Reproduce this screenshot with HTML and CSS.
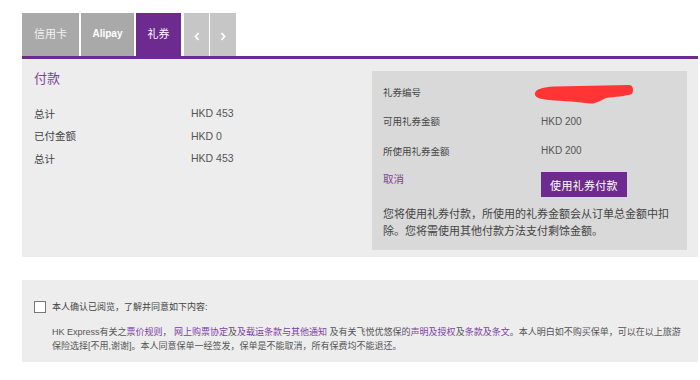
FILE: index.html
```html
<!DOCTYPE html>
<html lang="zh-CN">
<head>
    <meta charset="UTF-8">
    <title>付款</title>
    <link rel="stylesheet" href="styles.css">
</head>
<body>

<div class="page">
    <div class="tabs">
        <div class="tab">信用卡</div>
        <div class="tab tab-bold">Alipay</div>
        <div class="tab active">礼券</div>
        <div class="tab arrow">
            <svg width="6" height="9" viewBox="0 0 6 9"><path d="M4.5 1 L1.5 4.5 L4.5 8" fill="none" stroke="#fff" stroke-width="1.8"/></svg>
        </div>
        <div class="tab arrow arrow-last">
            <svg width="6" height="9" viewBox="0 0 6 9"><path d="M1.5 1 L4.5 4.5 L1.5 8" fill="none" stroke="#fff" stroke-width="1.8"/></svg>
        </div>
    </div>

    <div class="panel">
        <div class="summary">
            <h2 class="title">付款</h2>
            <div class="rows">
                <div class="label">总计</div><div class="value">HKD 453</div>
                <div class="label">已付金额</div><div class="value">HKD 0</div>
                <div class="label">总计</div><div class="value">HKD 453</div>
            </div>
        </div>

        <div class="voucher">
            <div class="vrow">
                <div class="vlabel">礼券编号</div>
                <div class="vvalue redact">
                    <svg class="scribble" width="100" height="20" viewBox="0 0 100 20">
                        <path d="M1 9 C2 5 10 3 20 2.5 C45 2 70 1.5 95 1 C99 1 100 6 98 10 C92 12 80 13 72 14 C66 17 61 20 56 19.5 C45 18 30 17 15 16 C5 15 0 13 1 9 Z" fill="#ff3434"/>
                    </svg>
                </div>
            </div>
            <div class="vrow">
                <div class="vlabel">可用礼券金额</div>
                <div class="vvalue">HKD 200</div>
            </div>
            <div class="vrow">
                <div class="vlabel">所使用礼券金额</div>
                <div class="vvalue">HKD 200</div>
            </div>
            <div class="actions">
                <a class="cancel" href="#">取消</a>
                <button class="btn">使用礼券付款</button>
            </div>
            <p class="note">您将使用礼券付款，所使用的礼券金额会从订单总金额中扣除。您将需使用其他付款方法支付剩馀金额。</p>
        </div>
    </div>

    <div class="terms">
        <label class="confirm"><span class="box"></span>本人确认已阅览，了解并同意如下内容:</label>
        <p class="terms-text">HK Express有关之<a href="#">票价规则</a>， <a href="#">网上购票协定</a>及<a href="#">及载运条款与其他通知</a> 及有关飞悦优悠保的<a href="#">声明及授权</a>及<a href="#">条款及条文</a>。本人明白如不购买保单，可以在以上旅游保险选择[不用,谢谢]。本人同意保单一经签发，保单是不能取消，所有保费均不能退还。</p>
    </div>
</div>

</body>
</html>
```

FILE: styles.css
```css
body {
    margin: 0;
    background-color: #fff;
    font-family: "Liberation Sans", "Noto Sans CJK SC", sans-serif;
    color: #444;
}
.page {
    padding: 13px 0 0 22px;
    width: 676px;
}
.tabs {
    display: flex;
    height: 43px;
}
.tab {
    display: flex;
    align-items: center;
    justify-content: center;
    width: 57px;
    margin-right: 2px;
    background-color: #a9a9a9;
    color: #f2f2f2;
    font-size: 11px;
    padding-bottom: 3px;
    box-sizing: border-box;
}
.tab-bold {
    width: 53px;
    font-weight: bold;
    font-size: 10px;
    color: #fff;
}
.tab.active {
    width: 45px;
    margin-right: 3px;
    background-color: #6d2b90;
    color: #fff;
}
.tab.arrow {
    width: 25px;
    margin-right: 1px;
    background-color: #c6c6c6;
    padding-bottom: 0;
    padding-top: 4px;
}
.tab.arrow-last {
    width: 26px;
}
.panel {
    display: flex;
    border-top: 3px solid #6d2b90;
    background-color: #ededed;
    padding: 12px 11px 7px 12px;
}
.summary {
    flex: 1;
}
.title {
    margin: 0 0 15px;
    font-size: 13px;
    line-height: 16px;
    font-weight: normal;
    color: #7d3fa3;
}
.rows {
    display: grid;
    grid-template-columns: 157px auto;
    grid-auto-rows: 22.5px;
    align-items: center;
    font-size: 10.5px;
}
.label {
    color: #444;
}
.value {
    color: #555;
}
.voucher {
    width: 315px;
    box-sizing: border-box;
    background-color: #d9d9d9;
    padding: 6px 11px 10px;
    font-size: 9.5px;
}
.vrow {
    display: flex;
    height: 29.5px;
    align-items: center;
}
.vlabel {
    width: 158px;
    color: #444;
}
.vvalue {
    font-size: 10px;
    color: #555;
}
.redact {
    position: relative;
    height: 100%;
}
.scribble {
    position: absolute;
    left: -7px;
    top: 7px;
}
.actions {
    display: flex;
    margin-top: 6.5px;
}
.cancel {
    width: 158px;
    font-size: 10.5px;
    line-height: 14px;
    color: #7d3fa3;
    text-decoration: none;
}
.btn {
    width: 86px;
    height: 25px;
    border: none;
    padding: 0;
    background-color: #6d2b90;
    color: #fff;
    font-family: inherit;
    font-size: 11px;
    letter-spacing: 0.3px;
}
.note {
    margin: 8.5px 0 0;
    font-size: 11px;
    line-height: 17px;
    color: #444;
}
.terms {
    margin-top: 23px;
    background-color: #ededed;
    padding: 20px 10px 9px 12px;
    font-size: 9px;
    height: 82px;
    box-sizing: border-box;
}
.confirm {
    display: flex;
    align-items: center;
    line-height: 14px;
    color: #444;
}
.box {
    width: 10px;
    height: 10px;
    border: 1px solid #777;
    background-color: #fff;
    margin-right: 6px;
}
.terms-text {
    margin: 11px 0 0 18px;
    line-height: 14px;
    color: #555;
}
.terms-text a {
    color: #7d3fa3;
    text-decoration: none;
}
```
